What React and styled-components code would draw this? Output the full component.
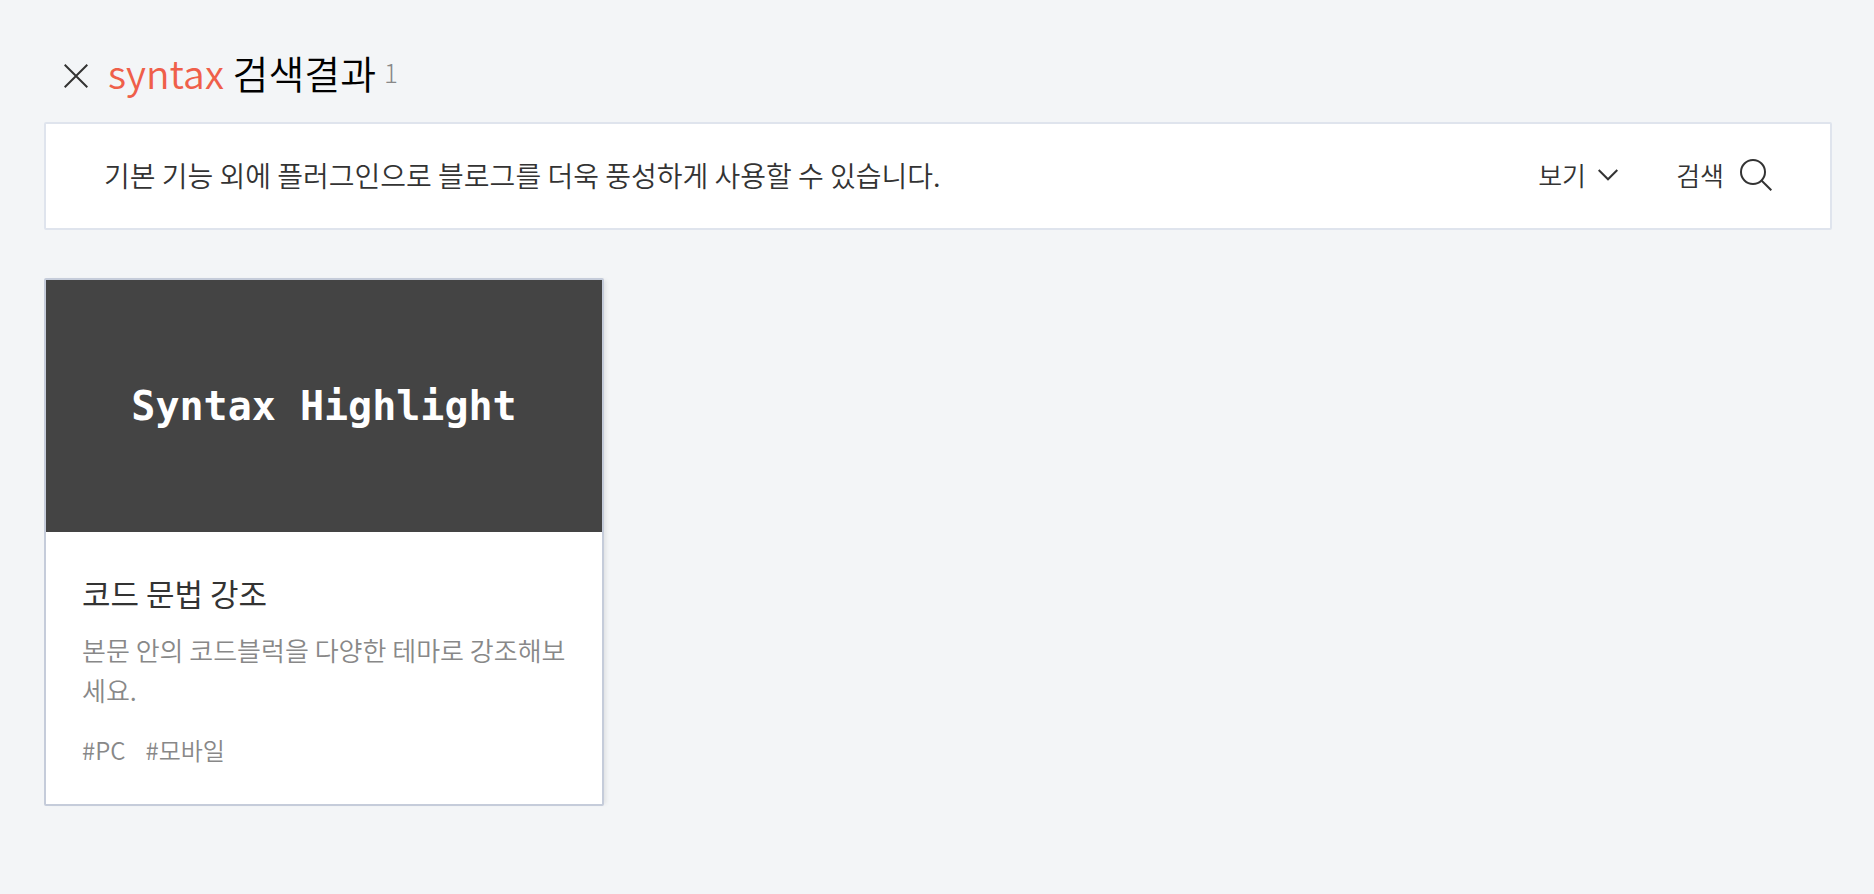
import styled, { createGlobalStyle } from "styled-components";

const plugins = [
  {
    id: 1,
    cover: "Syntax Highlight",
    title: "코드 문법 강조",
    description: "본문 안의 코드블럭을 다양한 테마로 강조해보세요.",
    tags: ["PC", "모바일"],
  },
];

function App() {
  return (
    <>
      <GlobalStyles />
      <Page>
        <Header>
          <CloseButton type="button" aria-label="닫기">
            <svg width="24" height="24" viewBox="0 0 24 24" aria-hidden="true">
              <path d="M0.7 0.7 23.3 23.3M23.3 0.7 0.7 23.3" />
            </svg>
          </CloseButton>
          <Title>
            <Keyword>syntax</Keyword> 검색결과
          </Title>
          <Count>{plugins.length}</Count>
        </Header>

        <Toolbar>
          <Notice>
            기본 기능 외에 플러그인으로 블로그를 더욱 풍성하게 사용할 수
            있습니다.
          </Notice>
          <ViewFilter>
            <ViewSelect aria-label="보기" defaultValue="view">
              <option value="view">보기</option>
            </ViewSelect>
            <svg width="20" height="12" viewBox="0 0 20 12" aria-hidden="true">
              <path d="M0.7 1 10 10.3 19.3 1" />
            </svg>
          </ViewFilter>
          <SearchButton type="button">
            검색
            <svg width="32" height="32" viewBox="0 0 32 32" aria-hidden="true">
              <circle cx="13" cy="13" r="12" />
              <path d="M21.5 21.5 31.3 31.3" />
            </svg>
          </SearchButton>
        </Toolbar>

        <PluginList>
          {plugins.map((plugin) => (
            <PluginCard key={plugin.id}>
              <Cover>{plugin.cover}</Cover>
              <CardBody>
                <PluginName>{plugin.title}</PluginName>
                <Description>{plugin.description}</Description>
                <Tags>
                  {plugin.tags.map((tag) => (
                    <Tag key={tag} href={`#${tag}`}>
                      #{tag}
                    </Tag>
                  ))}
                </Tags>
              </CardBody>
            </PluginCard>
          ))}
        </PluginList>
      </Page>
    </>
  );
}

export default App;

const GlobalStyles = createGlobalStyle`
  * {
    box-sizing: border-box;
  }

  body {
    margin: 0;
    background: #f3f5f7;
    color: #333;
    font-family: "Noto Sans CJK KR", sans-serif;
    font-weight: 350;
  }

  button,
  select {
    margin: 0;
    padding: 0;
    border: 0;
    background: none;
    color: inherit;
    font: inherit;
    cursor: pointer;
  }

  svg {
    display: block;
    flex: none;
    fill: none;
    stroke: #333;
    stroke-width: 2;
  }
`;

const Page = styled.main`
  padding: 42px 42px 80px 44px;
`;

const Header = styled.header`
  display: flex;
  align-items: center;
  height: 60px;
  margin-bottom: 20px;
  padding-left: 20px;
`;

const CloseButton = styled.button`
  margin: 8px 20px 0 0;
`;

const Title = styled.h1`
  margin: 0;
  color: #000;
  font-size: 39px;
  font-weight: 350;
  line-height: 60px;
`;

const Keyword = styled.span`
  color: #ef5f4a;
`;

const Count = styled.span`
  margin-left: 8px;
  color: #888;
  font-size: 26px;
  font-weight: 300;
  line-height: 40px;
`;

const Toolbar = styled.div`
  display: flex;
  align-items: center;
  height: 108px;
  margin-bottom: 48px;
  padding: 0 58px 2px;
  border: 2px solid #dfe4ed;
  border-radius: 2px;
  background: #fff;
`;

const Notice = styled.p`
  flex: 1;
  margin: 0;
  font-size: 28px;
  line-height: 40px;
`;

const ViewFilter = styled.label`
  display: flex;
  align-items: center;
  gap: 12px;
  margin-right: 58px;
`;

const ViewSelect = styled.select`
  appearance: none;
  font-size: 26px;
  line-height: 40px;
`;

const SearchButton = styled.button`
  display: flex;
  align-items: center;
  gap: 16px;
  font-size: 26px;
  line-height: 40px;
`;

const PluginList = styled.div`
  display: grid;
  grid-template-columns: repeat(3, 1fr);
  align-items: start;
  gap: 54px;
`;

const PluginCard = styled.article`
  border: 2px solid #c5ccda;
  border-radius: 2px;
  background: #fff;
  box-shadow: 4px 0 4px -2px rgba(0, 0, 0, 0.08);
`;

const Cover = styled.div`
  display: flex;
  align-items: center;
  justify-content: center;
  height: 252px;
  background: #444;
  color: #fff;
  font-family: "DejaVu Sans Mono", monospace;
  font-size: 40px;
  font-weight: 700;
`;

const CardBody = styled.div`
  padding: 38px 36px 34px;
`;

const PluginName = styled.h2`
  margin: 0 0 14px;
  font-size: 31px;
  font-weight: 400;
  line-height: 46px;
`;

const Description = styled.p`
  margin: 0 0 20px;
  color: #888;
  font-size: 26px;
  line-height: 40px;
`;

const Tags = styled.div`
  display: flex;
  gap: 20px;
`;

const Tag = styled.a`
  color: #888;
  font-size: 24px;
  line-height: 40px;
  text-decoration: none;
`;
